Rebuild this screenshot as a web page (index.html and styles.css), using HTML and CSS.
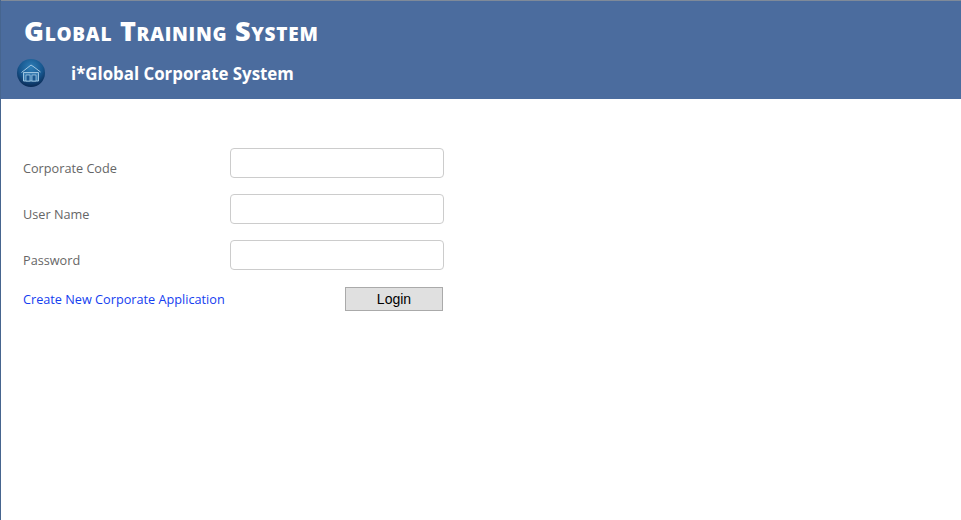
FILE: index.html
```html
<!DOCTYPE html>
<html lang="en">
<head>
    <meta charset="UTF-8">
    <title>Global Training System</title>
    <link rel="stylesheet" href="styles.css">
</head>
<body>
    <div class="page">
        <header class="banner">
            <h1 class="banner-title">Global Training System</h1>
            <div class="banner-sub">
                <svg class="home-icon" viewBox="0 0 30 30" width="30" height="30">
                    <defs>
                        <radialGradient id="ball" cx="50%" cy="30%" r="70%">
                            <stop offset="0" stop-color="#2f7fb8"/>
                            <stop offset="0.6" stop-color="#17568e"/>
                            <stop offset="1" stop-color="#0a2a55"/>
                        </radialGradient>
                    </defs>
                    <circle cx="15" cy="15" r="14" fill="url(#ball)"/>
                    <path d="M5.5 14.5 L15 7 L18 9 L24.5 14" fill="none" stroke="#a5c8e2" stroke-width="1"/>
                    <path d="M7.5 14.5 H22.5 V23 H7.5 Z" fill="#3d7fb3" stroke="#9cc4e0" stroke-width="1"/>
                    <path d="M10 17 H14 V23 H10 Z M16 17 H20 V23 H16 Z" fill="#1a5790" stroke="#9cc4e0" stroke-width="0.8"/>
                </svg>
                <h2 class="banner-name">i*Global Corporate System</h2>
            </div>
        </header>

        <form class="login">
            <div class="login-row">
                <label for="corpCode">Corporate Code</label>
                <input type="text" id="corpCode">
            </div>
            <div class="login-row">
                <label for="userName">User Name</label>
                <input type="text" id="userName">
            </div>
            <div class="login-row">
                <label for="password">Password</label>
                <input type="password" id="password">
            </div>
            <div class="login-actions">
                <a href="#" class="apply-link">Create New Corporate Application</a>
                <button type="button" class="login-btn">Login</button>
            </div>
        </form>
    </div>
</body>
</html>
```
FILE: styles.css
```css
html, body {
    height: 100%;
}

body {
    margin: 0;
    background-color: #fff;
    font-family: "Open Sans", "Noto Sans", sans-serif;
    overflow: hidden;
}

.page {
    box-sizing: border-box;
    height: 100%;
    border-left: 1px solid #46658f;
}

.banner {
    box-sizing: border-box;
    height: 99px;
    padding: 0 0 0 15px;
    background-color: #4b6c9e;
    border-top: 1px solid #7f8a99;
    color: #fff;
}

.banner-title {
    margin: 0;
    padding: 13px 0 0 8px;
    font-size: 27px;
    line-height: 34px;
    font-weight: 800;
    font-variant: small-caps;
    letter-spacing: 0.72px;
}

.banner-sub {
    display: flex;
    align-items: center;
    margin-top: 9px;
}

.home-icon {
    display: block;
    flex: none;
}

.banner-name {
    margin: 0 0 0 25px;
    padding-top: 2px;
    font-size: 16.85px;
    line-height: 30px;
    font-weight: 700;
}

.login {
    width: 421px;
    padding: 49px 0 0 22px;
}

.login-row {
    display: flex;
    align-items: flex-end;
    justify-content: space-between;
    height: 30px;
    margin-bottom: 16px;
}

.login-row label {
    font-size: 12.7px;
    line-height: 20px;
    color: #666;
}

.login-row input {
    box-sizing: border-box;
    width: 214px;
    height: 30px;
    border: 1px solid #ccc;
    border-radius: 4px;
    background-color: #fff;
}

.login-actions {
    display: flex;
    align-items: center;
    justify-content: space-between;
    margin-top: 17px;
}

.apply-link {
    font-size: 12.7px;
    color: #1540f0;
    text-decoration: none;
}

.login-btn {
    box-sizing: border-box;
    width: 98px;
    height: 24px;
    margin-right: 1px;
    padding: 0;
    border: 1px solid #aaa;
    background-color: #e0e0e0;
    color: #000;
    font-family: "Liberation Sans", Arial, sans-serif;
    font-size: 14px;
}
```
